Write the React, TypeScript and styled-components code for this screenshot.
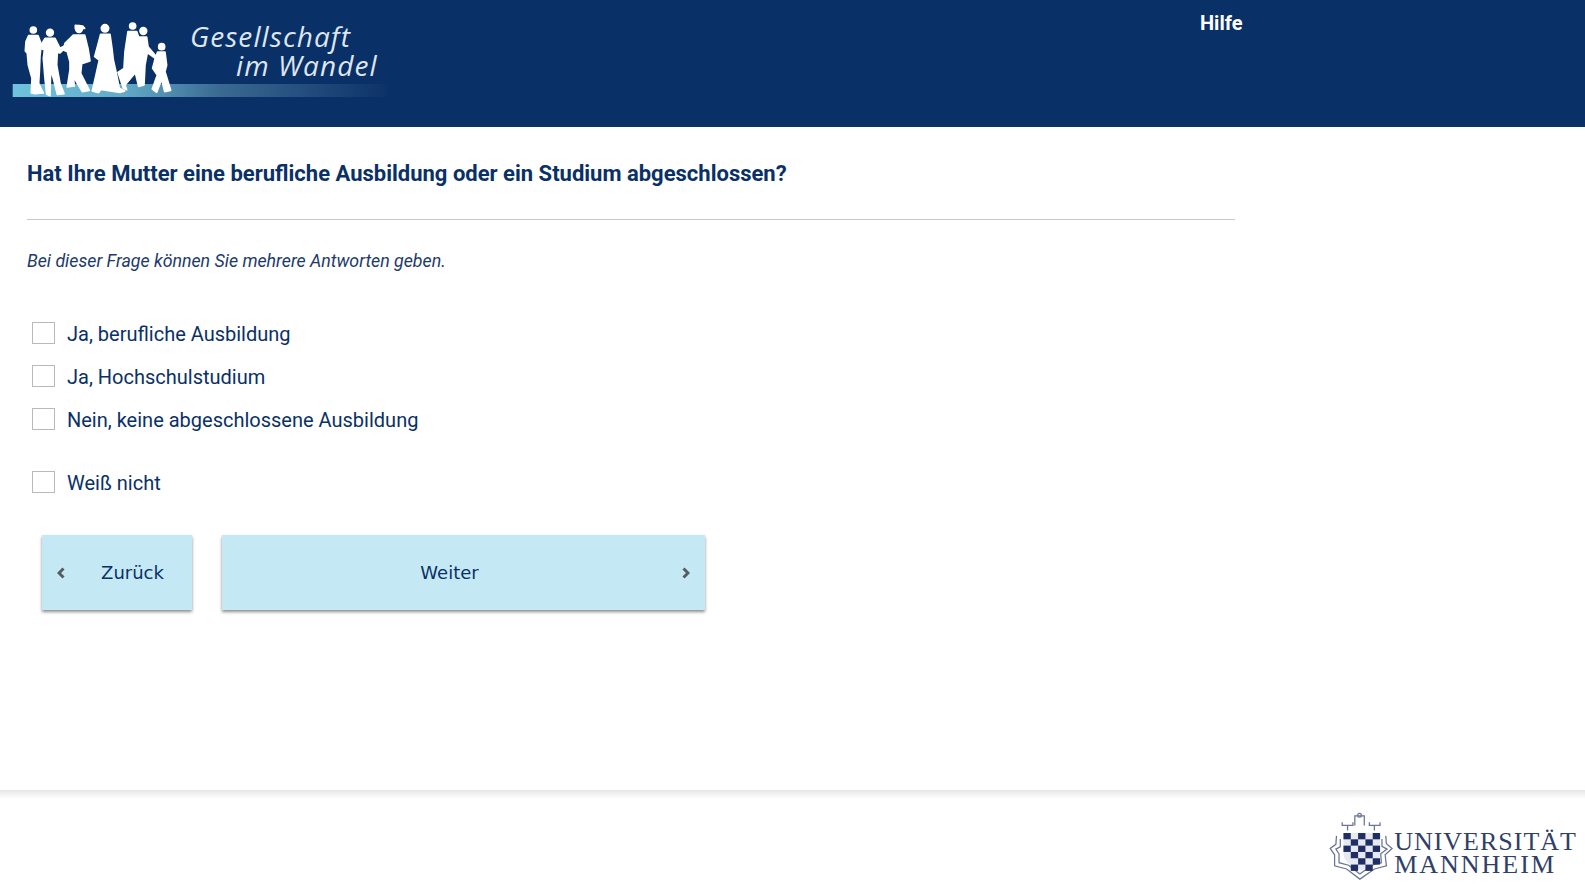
import styled, { createGlobalStyle } from "styled-components";

const GlobalStyle = createGlobalStyle`
  html, body {
    margin: 0;
    padding: 0;
    background: #fff;
    font-family: Roboto, "Liberation Sans", sans-serif;
    color: #0a3068;
  }
`;

const OPTIONS = [
  "Ja, berufliche Ausbildung",
  "Ja, Hochschulstudium",
  "Nein, keine abgeschlossene Ausbildung",
];

// checker cells of the shield, [col, row]
const CHECKER = [
  [0, 0], [2, 0], [4, 0],
  [1, 1], [3, 1],
  [0, 2], [2, 2], [4, 2],
  [1, 3], [3, 3],
  [2, 4], [4, 4],
  [1, 5], [3, 5],
];

const Logo = () => (
  <LogoSvg width="400" height="127" viewBox="0 0 400 127">
    <defs>
      <linearGradient id="bar" x1="0" x2="1" y1="0" y2="0">
        <stop offset="0" stopColor="#6fc3dc" />
        <stop offset="0.3" stopColor="#62aac8" />
        <stop offset="0.55" stopColor="#3a6a92" />
        <stop offset="1" stopColor="#0d3269" />
      </linearGradient>
      <filter id="soft">
        <feGaussianBlur stdDeviation="0.45" />
      </filter>
    </defs>
    <rect x="12.7" y="84" width="375" height="13" fill="url(#bar)" />
    <g
      transform="translate(10 15) scale(0.3333)"
      fill="#fff"
      stroke="#fff"
      strokeWidth="5"
      strokeLinejoin="round"
      filter="url(#soft)"
    >
      <circle cx="70" cy="45" r="9" />
      <path d="M56 62 L84 62 L94 88 L90 122 L88 170 L86 205 L100 234 L74 236 L64 234 L66 190 L55 150 L52 115 L46 108 L48 80Z" />
      <circle cx="120" cy="53" r="10" />
      <path d="M105 70 L135 70 L150 100 L162 94 L164 100 L150 114 L142 110 L140 150 L150 205 L162 236 L142 238 L130 190 L122 165 L120 242 L110 238 L105 190 L100 130 L103 105 L92 100 L90 95Z" />
      <circle cx="207" cy="42" r="10" />
      <path d="M196 31 L218 33 L224 40 L196 40Z" />
      <path d="M190 60 L224 60 L234 100 L240 138 L215 146 L212 175 L238 226 L217 230 L190 185 L193 213 L172 216 L180 165 L180 140 L172 110 L160 105 L165 85Z" />
      <circle cx="285" cy="40" r="11" />
      <path d="M272 58 L300 58 L306 100 L310 135 L318 170 L328 220 L344 228 L330 232 L272 223 L266 233 L247 228 L258 180 L268 135 L254 125 L265 85Z" />
      <circle cx="368" cy="33" r="9" />
      <circle cx="400" cy="48" r="10" />
      <path d="M354 50 L380 50 L386 66 L410 66 L414 95 L438 124 L435 129 L412 113 L405 150 L402 210 L386 214 L376 173 L345 210 L350 224 L340 220 L324 172 L342 160 L345 110Z" />
      <circle cx="455" cy="95" r="9" />
      <path d="M443 111 L465 111 L470 150 L465 170 L482 226 L464 230 L455 193 L440 232 L427 222 L442 180 L428 160 L436 130Z" />
    </g>
    <LogoText x="190" y="46.5">Gesellschaft</LogoText>
    <LogoText x="236" y="76">im Wandel</LogoText>
  </LogoSvg>
);

const Crest = () => (
  <svg width="67" height="72" viewBox="0 0 212 228">
    <g fill="none" stroke="#6a7694" strokeWidth="4">
      <path d="M48 42 L48 52 L82 52 L82 42 M65 52 L65 68 M88 52 L88 22 L118 22 L118 52" />
      <path d="M134 42 L134 52 L168 52 L168 42 M150 52 L150 68" />
      <circle cx="103" cy="20" r="6" />
      <path d="M30 85 L28 112 L10 125 L24 145 L24 180 L62 190 L104 222 L150 190 L188 180 L184 145 L206 125 L188 110 L186 85" />
      <path d="M42 95 L42 120 L28 127 L38 142 L38 170 L68 178 L104 206 L142 178 L172 170 L170 142 L190 127 L174 118 L174 95" />
    </g>
    <path d="M52 75 H168 V140 C168 170 130 185 110 195 C88 185 52 170 52 140Z" fill="#e6e9f0" />
    <g fill="#1f2f63">
      {CHECKER.map(([c, r]) => (
        <rect key={`${c}-${r}`} x={52 + c * 23.2} y={76 + r * 20} width="23.2" height="20" />
      ))}
    </g>
  </svg>
);

const Chevron = ({ back }: { back?: boolean }) => (
  <svg width="8" height="12" viewBox="0 0 8 12">
    <path
      d={back ? "M6.5 1.5 L2 6 L6.5 10.5" : "M1.5 1.5 L6 6 L1.5 10.5"}
      fill="none"
      stroke="#555c66"
      strokeWidth="3"
    />
  </svg>
);

export default function App() {
  return (
    <Page>
      <GlobalStyle />
      <Header>
        <Logo />
        <HelpLink>Hilfe</HelpLink>
      </Header>
      <Main>
        <Question>Hat Ihre Mutter eine berufliche Ausbildung oder ein Studium abgeschlossen?</Question>
        <Rule />
        <Hint>Bei dieser Frage können Sie mehrere Antworten geben.</Hint>
        <OptionList>
          {OPTIONS.map((option) => (
            <Option key={option}>
              <Box type="checkbox" />
              {option}
            </Option>
          ))}
          <Option $separate>
            <Box type="checkbox" />
            Weiß nicht
          </Option>
        </OptionList>
        <Buttons>
          <NavButton $width={150} $back>
            <Chevron back />
            <ButtonLabel $back>Zurück</ButtonLabel>
          </NavButton>
          <NavButton $width={484}>
            <ButtonLabel>Weiter</ButtonLabel>
            <Chevron />
          </NavButton>
        </Buttons>
      </Main>
      <Footer>
        <Crest />
        <Wordmark>
          <WordLine $spacing={1}>UNIVERSITÄT</WordLine>
          <WordLine $spacing={2}>MANNHEIM</WordLine>
        </Wordmark>
      </Footer>
    </Page>
  );
}

const Page = styled.div`
  display: flex;
  flex-direction: column;
  height: 884px;
  overflow: hidden;
`;
const Header = styled.header`
  flex: none;
  display: flex;
  align-items: flex-start;
  height: 127px;
  background: #0a3068;
`;
const LogoSvg = styled.svg`
  flex: none;
  display: block;
`;
const LogoText = styled.text`
  font-family: "Open Sans", sans-serif;
  font-style: italic;
  font-size: 28px;
  letter-spacing: 1.1px;
  fill: #dfe6ee;
`;
const HelpLink = styled.a`
  margin: 11px 0 0 800px;
  font-size: 20px;
  line-height: 24px;
  font-weight: 700;
  color: #fff;
`;
const Main = styled.main`
  flex: 1;
  width: 1208px;
  padding: 34px 0 0 27px;
`;
const Question = styled.h1`
  margin: 0;
  font-size: 22px;
  line-height: 26px;
  font-weight: 700;
`;
const Rule = styled.hr`
  margin: 32px 0 0;
  border: 0;
  height: 1px;
  background: #c9c9c9;
`;
const Hint = styled.p`
  margin: 29px 0 0;
  font-size: 17.75px;
  line-height: 24px;
  font-style: italic;
  color: #1c3a6b;
`;
const OptionList = styled.div`
  display: flex;
  flex-direction: column;
  margin: 39px 0 0 5px;
`;
const Option = styled.label<{ $separate?: boolean }>`
  display: flex;
  align-items: center;
  gap: 12px;
  height: 43px;
  margin-top: ${(p) => (p.$separate ? "20px" : "0")};
  font-size: 20px;
`;
const Box = styled.input`
  appearance: none;
  flex: none;
  margin: -2px 0 0;
  width: 23px;
  height: 22px;
  background: #fff;
  border: 1.5px solid #b9b9b9;
`;
const Buttons = styled.div`
  display: flex;
  gap: 30px;
  margin: 31px 0 0 15px;
`;
const NavButton = styled.button<{ $width: number; $back?: boolean }>`
  display: flex;
  align-items: center;
  width: ${(p) => (p.$back ? p.$width : p.$width - 1)}px;
  height: 75px;
  padding: ${(p) => (p.$back ? "0 0 0 15px" : "0 15px 0 0")};
  border: 0;
  background: #c5e8f5;
  box-shadow: 0 2px 3px rgba(0, 0, 0, 0.45);
  color: #0a3068;
  font-family: "DejaVu Sans", sans-serif;
  font-size: 18px;
`;
const ButtonLabel = styled.span<{ $back?: boolean }>`
  flex: 1;
  text-align: center;
  padding: ${(p) => (p.$back ? "0 0 0 8px" : "0 5px 0 0")};
`;
const Footer = styled.footer`
  flex: none;
  display: flex;
  align-items: flex-start;
  justify-content: flex-end;
  height: 94px;
  box-sizing: border-box;
  padding: 19px 8px 0 0;
  background: linear-gradient(#e6e6e6, #fff 9px);
`;
const Wordmark = styled.div`
  display: flex;
  flex-direction: column;
  align-items: flex-start;
  margin-top: 21px;
  font-family: "Liberation Serif", serif;
  font-size: 26px;
  line-height: 23px;
  color: #2f3f68;
`;
const WordLine = styled.span<{ $spacing: number }>`
  letter-spacing: ${(p) => p.$spacing}px;
`;
